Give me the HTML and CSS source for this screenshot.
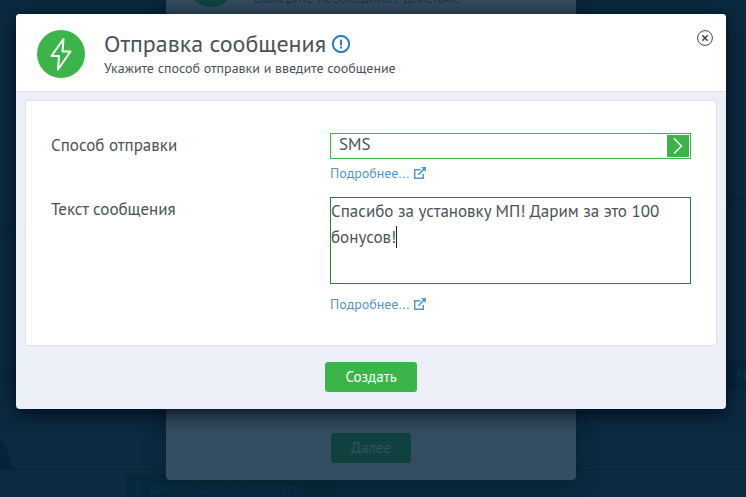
FILE: index.html
```html
<!DOCTYPE html>
<html lang="ru">
<head>
<meta charset="utf-8">
<meta name="viewport" content="width=device-width, initial-scale=1">
<title>Отправка сообщения</title>
<link rel="stylesheet" href="styles.css">
</head>
<body>
<div class="page">
  <div class="backdrop" aria-hidden="true">
    <div class="backdrop-row"><span class="backdrop-note">ак</span><span>ите</span></div>
    <div class="backdrop-bar"><span>озд</span><span class="backdrop-action">Н</span></div>
    <svg class="backdrop-tab" viewBox="0 0 13 28"><path d="M0 0C4 0 5 4 7 10L13 28H0Z"/></svg>
    <div class="backdrop-footer">
      <div class="backdrop-chip">
        <svg viewBox="0 0 24 34"><path d="M14 2 2 18h8L8 32 22 14h-9z"/></svg>
        <span>Дополнительные бонусы</span>
      </div>
    </div>
  </div>

  <section class="previous" aria-hidden="true">
    <header class="previous-head">
      <span class="previous-icon"></span>
      <p>Выберите необходимое действие</p>
    </header>
    <button class="button button-muted" type="button" tabindex="-1">Далее</button>
  </section>

  <form class="dialog" role="dialog" aria-labelledby="dialog-title">
    <header class="dialog-head">
      <svg class="badge" viewBox="0 0 48 48" aria-hidden="true">
        <circle cx="24" cy="24" r="24"/>
        <path d="M26.5 9 14.5 26h7.5L21 39.5 33.5 21.5h-8z"/>
      </svg>
      <div class="heading">
        <h1 id="dialog-title">Отправка сообщения
          <svg class="info" viewBox="0 0 18 18" aria-hidden="true"><circle cx="9" cy="9" r="8.1"/><path d="M9 4.8v5.6M9 11.6v1.8"/></svg>
        </h1>
        <p>Укажите способ отправки и введите сообщение</p>
      </div>
      <button class="close" type="button" aria-label="Закрыть">
        <svg viewBox="0 0 16 16"><circle cx="8" cy="8" r="7.4"/><path class="cross" d="m5.3 5.3 5.4 5.4m0-5.4-5.4 5.4"/></svg>
      </button>
    </header>

    <div class="card">
      <label for="method">Способ отправки</label>
      <div class="field">
        <div class="select">
          <select id="method"><option>SMS</option></select>
          <svg viewBox="0 0 22 22" aria-hidden="true"><path d="m7 3.5 7.5 7.5L7 18.5"/></svg>
        </div>
        <a class="more" href="#">Подробнее...
          <svg viewBox="0 0 12 12" aria-hidden="true"><path d="M6.5 2.7H.7v8.6h8.6V7M4.3 7.8 10 2.1"/><path class="head" d="M7 0H12v5z"/></svg>
        </a>
      </div>
      <label for="message">Текст сообщения</label>
      <div class="field">
        <div class="editor">
          <textarea id="message" rows="3" spellcheck="false">Спасибо за установку МП! Дарим за это 100 бонусов!</textarea>
          <span class="caret"></span>
        </div>
        <a class="more" href="#">Подробнее...
          <svg viewBox="0 0 12 12" aria-hidden="true"><path d="M6.5 2.7H.7v8.6h8.6V7M4.3 7.8 10 2.1"/><path class="head" d="M7 0H12v5z"/></svg>
        </a>
      </div>
    </div>

    <footer class="dialog-foot">
      <button class="button" type="submit">Создать</button>
    </footer>
  </form>
</div>
</body>
</html>
```

FILE: styles.css
```css
* {
  box-sizing: border-box;
}

body {
  margin: 0;
  background: #0b2b40;
  color: #495359;
  font-family: "PT Sans", "Noto Sans", sans-serif;
}

h1,
p {
  margin: 0;
}

button,
select,
textarea {
  font: inherit;
  color: inherit;
}

.page {
  position: relative;
  min-height: 100vh;
  overflow: hidden;
}

/* Dimmed page under the dialogs */
.backdrop {
  display: flex;
  flex-direction: column;
  height: 100vh;
  color: #082538;
  font-size: 17px;
  line-height: 20px;
}

.backdrop-row,
.backdrop-bar {
  display: flex;
  justify-content: space-between;
}

.backdrop-row {
  margin-top: 190px;
  font-size: 14px;
}

.backdrop-note {
  padding-top: 28px;
}

.backdrop-bar {
  margin-top: auto;
  line-height: 30px;
}

.backdrop-action {
  width: 30px;
  padding-left: 20px;
  background: #04273d;
  color: #14344a;
  overflow: hidden;
}

.backdrop-tab {
  width: 13px;
  height: 28px;
  margin-top: 51px;
  fill: #062338;
}

.backdrop-footer {
  height: 28px;
  padding: 4px 0 0 126px;
  border-top: 1px solid #072337;
}

.backdrop-chip {
  display: flex;
  align-items: center;
  gap: 5px;
  width: 210px;
  height: 28px;
  padding-left: 6px;
  background: #05293b;
  color: #0b2f45;
  font-size: 14px;
  font-weight: 700;
  white-space: nowrap;
}

.backdrop-chip svg {
  width: 12px;
  height: 16px;
  fill: none;
  stroke: #0b2f45;
  stroke-width: 3;
}

/* Previous step, left open under the current dialog */
.previous {
  position: absolute;
  top: -62px;
  left: calc(50% - 207px);
  display: flex;
  flex-direction: column;
  align-items: center;
  justify-content: space-between;
  width: 410px;
  height: 542px;
  padding: 21px 21px 17px;
  border-radius: 4px;
  background: #344d60;
  box-shadow: 0 4px 20px #08202f;
}

.previous-head {
  display: flex;
  align-items: flex-end;
  gap: 19px;
  width: 100%;
  color: #183448;
  font-size: 14px;
  line-height: 18px;
}

.previous-icon {
  width: 48px;
  height: 48px;
  border-radius: 50%;
  background: #0f4540;
}

/* Current dialog */
.dialog {
  position: absolute;
  top: 14px;
  left: 16px;
  right: 20px;
  border-radius: 4px;
  background: #eceff7;
  box-shadow: 0 4px 20px #00091a;
}

.dialog-head {
  display: flex;
  align-items: flex-start;
  gap: 19px;
  padding: 16px 13px 12px 21px;
  border-bottom: 1px solid #e0e0e2;
  border-radius: 4px 4px 0 0;
  background: #fff;
}

.badge {
  flex: none;
  width: 48px;
  height: 48px;
  fill: #3bb54a;
}

.badge path {
  fill: none;
  stroke: #fff;
  stroke-width: 2;
  stroke-linejoin: round;
}

.heading {
  flex: 1;
}

.heading h1 {
  display: flex;
  align-items: center;
  gap: 6px;
  font-size: 24px;
  font-weight: 400;
  line-height: 27px;
}

.heading p {
  font-size: 14px;
  line-height: 22px;
}

.info {
  width: 18px;
  height: 18px;
  fill: none;
  stroke: #2f7dc5;
  stroke-width: 2;
}

.close {
  width: 16px;
  height: 16px;
  padding: 0;
  border: 0;
  background: none;
}

.close svg {
  display: block;
  fill: none;
  stroke: #3c4a52;
}

.close .cross {
  stroke-width: 1.6;
}

.card {
  display: grid;
  grid-template-columns: 279fr 361fr;
  row-gap: 12px;
  margin: 8px 9px 0;
  padding: 32px 25px 29px;
  border: 1px solid #e0e0e2;
  border-radius: 3px;
  background: #fff;
  font-size: 17px;
  line-height: 26px;
}

.card label {
  line-height: 24px;
}

.select,
.editor {
  position: relative;
  margin-bottom: 2px;
}

.select select {
  display: block;
  width: 100%;
  height: 26px;
  padding: 0 28px 4px 8px;
  border: 1px solid #3bb54a;
  border-radius: 0;
  outline: 0;
  appearance: none;
  background: #fff;
  line-height: 20px;
}

.select svg {
  position: absolute;
  top: 2px;
  right: 2px;
  width: 22px;
  height: 22px;
  background: #3bb54a;
  fill: none;
  stroke: #fff;
  stroke-width: 1.5;
  pointer-events: none;
}

.editor {
  margin-bottom: 8px;
}

.editor textarea {
  display: block;
  width: 100%;
  height: 87px;
  padding: 0;
  border: 1px solid #2b8039;
  outline: 0;
  line-height: 26px;
  resize: none;
}

.caret {
  position: absolute;
  top: 29px;
  left: 66px;
  width: 1px;
  height: 22px;
  background: #222;
}

.more {
  display: flex;
  align-items: center;
  gap: 5px;
  color: #5596cb;
  font-size: 14px;
  line-height: 24px;
  text-decoration: none;
}

.more svg {
  width: 12px;
  height: 12px;
  fill: none;
  stroke: currentColor;
  stroke-width: 1.5;
}

.more .head {
  fill: currentColor;
  stroke: none;
}

.dialog-foot {
  display: flex;
  justify-content: center;
  padding: 16px 0 17px;
}

.button {
  height: 30px;
  padding: 0 20px;
  border: 0;
  border-radius: 3px;
  background: #3bb54a;
  color: #fff;
  font-size: 15px;
  line-height: 20px;
}

.button-muted {
  background: #0f413f;
  color: #2f5261;
}
```
